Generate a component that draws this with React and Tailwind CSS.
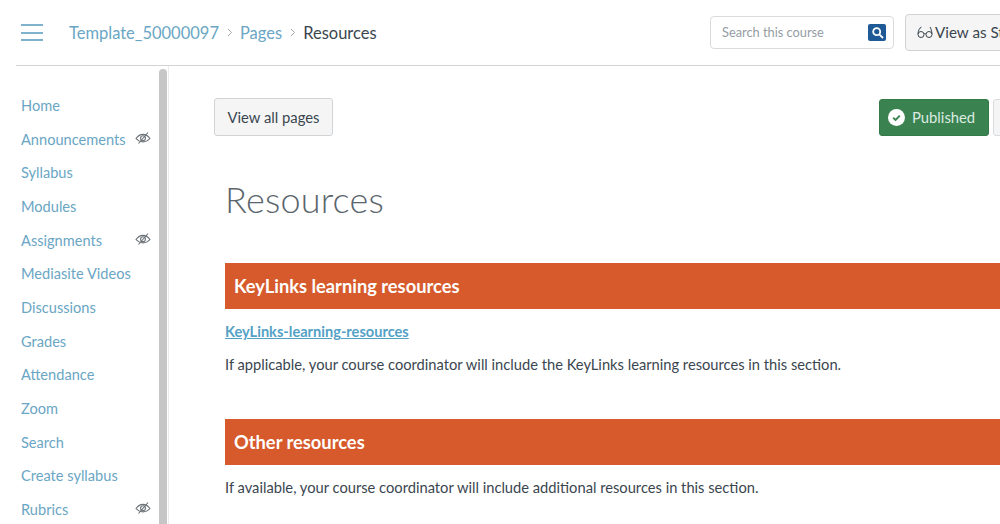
import React from "react";

const Eye = () => (
  <svg width="16" height="14" viewBox="0 0 16 14" fill="none" stroke="#6b7278" strokeWidth="1.100" className="shrink-0">
    <path d="M1 7.500C3 4.800 5.400 3.400 8 3.400s5 1.400 7 4.100c-2 2.200-4.400 3.400-7 3.400S3 9.700 1 7.500Z" />
    <circle cx="8" cy="7.200" r="2.400" />
    <path d="M3.500 12.500 13 1.500" />
  </svg>
);

const Chevron = () => (
  <svg width="7" height="9" viewBox="0 0 7 9" fill="none" stroke="#a0a7ae" strokeWidth="1" className="shrink-0">
    <path d="M2 1 5.500 4.500 2 8" />
  </svg>
);

const items = [
  ["Home", false],
  ["Announcements", true],
  ["Syllabus", false],
  ["Modules", false],
  ["Assignments", true],
  ["Mediasite Videos", false],
  ["Discussions", false],
  ["Grades", false],
  ["Attendance", false],
  ["Zoom", false],
  ["Search", false],
  ["Create syllabus", false],
  ["Rubrics", true],
];

export default function App() {
  return (
    <div className="w-[1000px] h-[524px] overflow-hidden bg-white text-[#3a464f] font-['Lato','Noto_Sans',sans-serif]">
      <header className="ml-4 h-[66px] border-b border-[#d0d4d7] flex items-center">
        <div className="ml-[5px] w-[22px] flex flex-col gap-[5.500px] shrink-0">
          <span className="h-[2px] bg-[#7fb2cd]" />
          <span className="h-[2px] bg-[#7fb2cd]" />
          <span className="h-[2px] bg-[#7fb2cd]" />
        </div>
        <nav className="ml-[26px] flex items-center text-[16.500px] leading-[24px]">
          <span className="text-[#6aa6c4]">Template_50000097</span>
          <span className="mx-[7px]"><Chevron /></span>
          <span className="text-[#6aa6c4]">Pages</span>
          <span className="mx-[7px]"><Chevron /></span>
          <span className="text-[#3a464f]">Resources</span>
        </nav>
        <div className="ml-auto flex items-center shrink-0 gap-[11px] w-[290px]">
          <div className="w-[184px] h-[33px] border border-[#d9dcdf] rounded flex items-center justify-between pl-[11px] pr-[7px] shrink-0">
            <span className="text-[12.800px] text-[#949da4]">Search this course</span>
            <span className="w-[18px] h-[17px] rounded-[2px] bg-[#1f5a96] flex items-center justify-center">
              <svg width="13" height="13" viewBox="0 0 13 13" fill="none" stroke="#fff" strokeWidth="1.800">
                <circle cx="5.700" cy="5.700" r="3.500" />
                <path d="M8.300 8.300 12 12" />
              </svg>
            </span>
          </div>
          <div className="w-[120px] h-[37px] -mt-[1px] border border-[#cfd3d6] rounded-l bg-[#f5f5f5] flex items-center pl-[11px] gap-[2px] shrink-0 whitespace-nowrap text-[15.200px]">
            <svg width="16" height="13" viewBox="0 0 16 13" fill="none" stroke="#3a464f" strokeWidth="1" className="shrink-0">
              <circle cx="4" cy="8.500" r="3" />
              <circle cx="12" cy="8.500" r="3" />
              <path d="M7 8c.6-.5 1.400-.5 2 0M1 8c.2-3 1.200-6 3.500-7M15 8c-.2-3-1.200-6-2-7" />
            </svg>
            <span>View as Student</span>
          </div>
        </div>
      </header>
      <div className="flex h-[458px]">
        <aside className="ml-4 w-[153px] border-r border-[#e9ebec] relative shrink-0 overflow-hidden">
          <ul className="pt-[23px] pl-[5px] pr-[17px]">
            {items.map(([label, hidden]) => (
              <li key={label} className="h-[33.700px] flex items-center justify-between text-[14.600px] text-[#6aa6c4] whitespace-nowrap">
                <span>{label}</span>
                {hidden && <span className="-mt-[4px]"><Eye /></span>}
              </li>
            ))}
          </ul>
          <div className="absolute right-[1px] top-[3px] bottom-0 w-[8px] rounded-t bg-[#c6c6c6]" />
        </aside>
        <main className="flex-1 min-w-0 overflow-hidden pl-[45px]">
          <div className="flex items-center justify-between h-[38px] mt-[32px] whitespace-nowrap">
            <div className="w-[119px] h-[38px] border border-[#d0d4d7] rounded-[3px] bg-[#f5f5f5] flex items-center justify-center text-[14.800px]">View all pages</div>
            <div className="flex items-center gap-[4px] -mr-[29px]">
              <div className="w-[110px] h-[37px] rounded-[3px] bg-[#3a8350] border border-[#357a49] flex items-center pl-[8px] gap-[7px] text-[14.800px] text-[#dcebe1]">
                <svg width="17" height="17" viewBox="0 0 18 18" className="shrink-0">
                  <circle cx="9" cy="9" r="9" fill="#fff" />
                  <path d="M5.500 9.200 8 11.500l4.500-4.500" fill="none" stroke="#3a8350" strokeWidth="2" />
                </svg>
                <span>Published</span>
              </div>
              <div className="w-[36px] h-[37px] border border-[#d9dcdf] rounded-[3px] bg-[#f5f5f5]" />
            </div>
          </div>
          <div className="ml-[11px]">
            <h1 className="mt-[41px] text-[36px] leading-[44px] font-light text-[#5b656d] tracking-[0.2px]">Resources</h1>
            <h2 className="mt-[42px] h-[46px] pt-[2px] bg-[#d65a2b] text-white font-bold text-[18.300px] flex items-center pl-[9px]">KeyLinks learning resources</h2>
            <p className="mt-[12px] text-[14.600px] leading-[22px] font-bold text-[#55a1c6] underline">KeyLinks-learning-resources</p>
            <p className="mt-[10px] text-[14.700px] leading-[22px] whitespace-nowrap">If applicable, your course coordinator will include the KeyLinks learning resources in this section.</p>
            <h2 className="mt-[44px] h-[46px] pt-[2px] bg-[#d65a2b] text-white font-bold text-[18.300px] flex items-center pl-[9px]">Other resources</h2>
            <p className="mt-[11px] text-[14.700px] leading-[22px] whitespace-nowrap">If available, your course coordinator will include additional resources in this section.</p>
          </div>
        </main>
      </div>
    </div>
  );
}
